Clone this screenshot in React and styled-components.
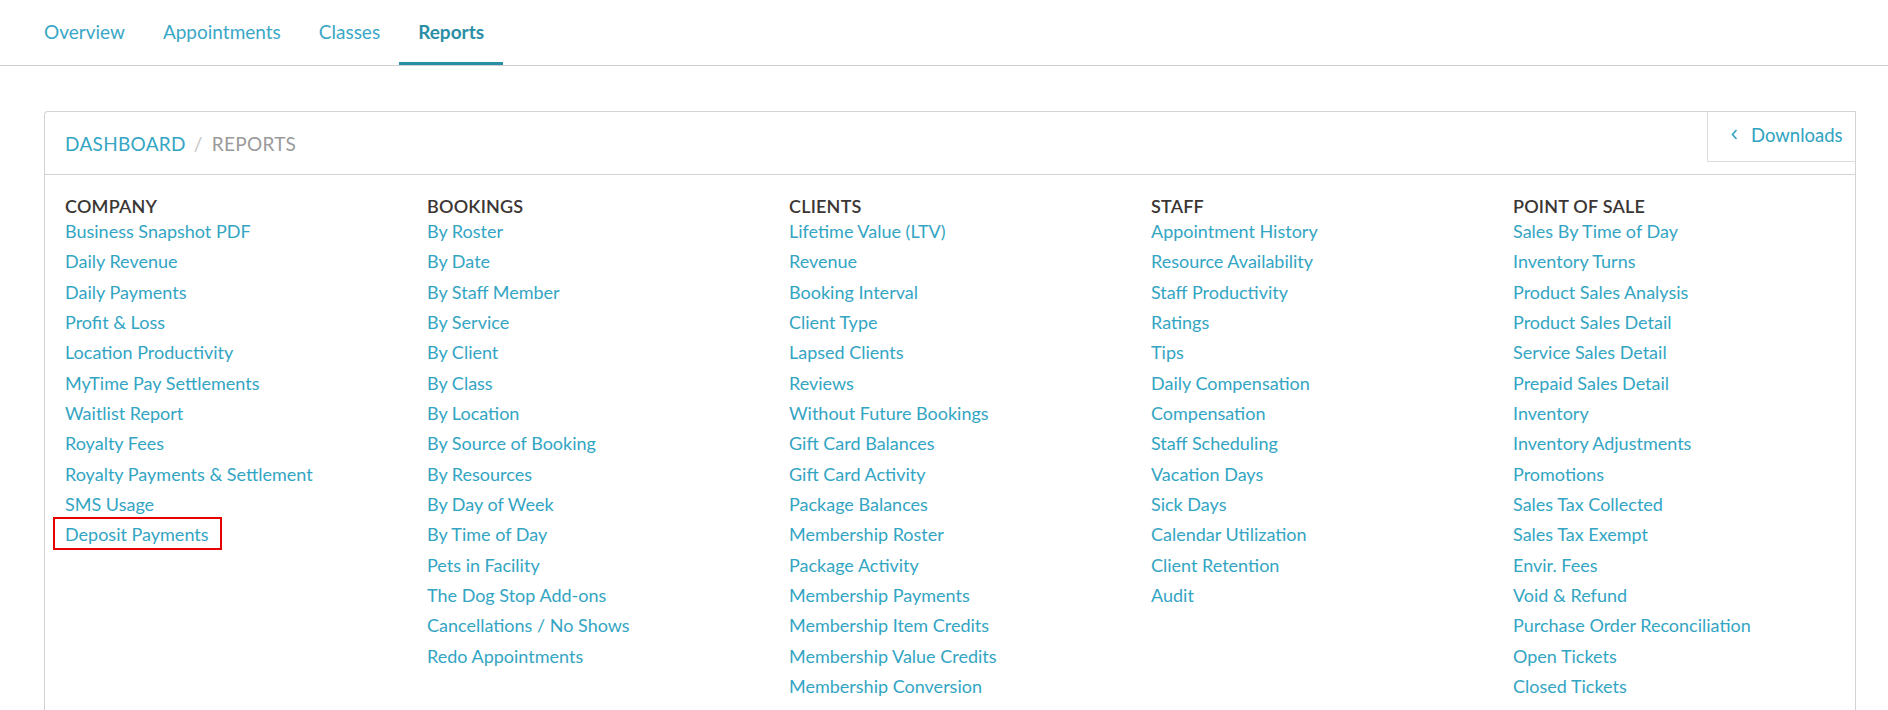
import React from "react";
import styled, { createGlobalStyle } from "styled-components";

const Global = createGlobalStyle`
  html, body { margin: 0; padding: 0; background: #fff; }
  body { font-family: Lato, "Open Sans", sans-serif; -webkit-font-smoothing: antialiased; }
  * { box-sizing: border-box; }
`;

const Nav = styled.nav`
  display: flex;
  padding-left: 25px;
  height: 66px;
  border-bottom: 1px solid #cfcfcf;
`;

const Tab = styled.a`
  display: flex;
  align-items: center;
  height: 65px;
  padding: 0 19px;
  font-size: 19px;
  color: ${(p) => (p.$active ? "#2a8fa6" : "#3aa7c6")};
  font-weight: ${(p) => (p.$active ? 700 : 400)};
  border-bottom: 3px solid ${(p) => (p.$active ? "#2a8fa6" : "transparent")};
  cursor: pointer;
`;

const Page = styled.main`
  padding: 45px 32px 0 44px;
`;

const Card = styled.section`
  position: relative;
  border: 1px solid #d3d3d3;
  border-radius: 4px 4px 0 0;
  border-bottom: none;
  height: 620px;
`;

const CardHeader = styled.header`
  height: 63px;
  display: flex;
  align-items: center;
  padding: 0 20px;
  border-bottom: 1px solid #d3d3d3;
  font-size: 19px;
  letter-spacing: 0.3px;
`;

const Crumb = styled.span`
  color: ${(p) => (p.$current ? "#9a9a9a" : "#34a6c4")};
`;

const Slash = styled.span`
  color: #c4c4c4;
  margin: 0 9px 0 8px;
`;

const Downloads = styled.button`
  position: absolute;
  top: -1px;
  right: -1px;
  width: 149px;
  height: 51px;
  display: flex;
  align-items: center;
  gap: 13px;
  padding: 0 0 4px 23px;
  background: #fff;
  border: 1px solid #dcdcdc;
  border-top-color: #d3d3d3;
  border-right-color: #d3d3d3;
  font-family: inherit;
  font-size: 18.5px;
  color: #2fa3c0;
  cursor: pointer;
`;

const Columns = styled.div`
  display: grid;
  grid-template-columns: repeat(5, 1fr);
  padding-top: 21px;
`;

const Column = styled.div`
  display: flex;
  flex-direction: column;
  padding-left: 20px;
`;

const Heading = styled.h3`
  margin: 0;
  height: 20px;
  line-height: 20px;
  font-size: 18px;
  font-weight: 600;
  color: #3b3634;
  text-transform: uppercase;
  letter-spacing: 0.2px;
`;

const Item = styled.div`
  height: 30.33px;
  line-height: 30.33px;
`;

const ReportLink = styled.a`
  position: relative;
  display: inline-block;
  font-size: 18px;
  color: #33a5c3;
  cursor: pointer;
  white-space: nowrap;
  ${(p) =>
    p.$highlight &&
    `
    &::after {
      content: "";
      position: absolute;
      left: -12px;
      right: -13px;
      top: -2px;
      bottom: 0;
      border: 2px solid #e60000;
    }
  `}
`;

const columns = [
  {
    title: "Company",
    items: [
      "Business Snapshot PDF",
      "Daily Revenue",
      "Daily Payments",
      "Profit & Loss",
      "Location Productivity",
      "MyTime Pay Settlements",
      "Waitlist Report",
      "Royalty Fees",
      "Royalty Payments & Settlement",
      "SMS Usage",
      "Deposit Payments",
    ],
    highlight: "Deposit Payments",
  },
  {
    title: "Bookings",
    items: [
      "By Roster",
      "By Date",
      "By Staff Member",
      "By Service",
      "By Client",
      "By Class",
      "By Location",
      "By Source of Booking",
      "By Resources",
      "By Day of Week",
      "By Time of Day",
      "Pets in Facility",
      "The Dog Stop Add-ons",
      "Cancellations / No Shows",
      "Redo Appointments",
    ],
  },
  {
    title: "Clients",
    items: [
      "Lifetime Value (LTV)",
      "Revenue",
      "Booking Interval",
      "Client Type",
      "Lapsed Clients",
      "Reviews",
      "Without Future Bookings",
      "Gift Card Balances",
      "Gift Card Activity",
      "Package Balances",
      "Membership Roster",
      "Package Activity",
      "Membership Payments",
      "Membership Item Credits",
      "Membership Value Credits",
      "Membership Conversion",
      "Walk-Ins",
    ],
  },
  {
    title: "Staff",
    items: [
      "Appointment History",
      "Resource Availability",
      "Staff Productivity",
      "Ratings",
      "Tips",
      "Daily Compensation",
      "Compensation",
      "Staff Scheduling",
      "Vacation Days",
      "Sick Days",
      "Calendar Utilization",
      "Client Retention",
      "Audit",
    ],
  },
  {
    title: "Point of Sale",
    items: [
      "Sales By Time of Day",
      "Inventory Turns",
      "Product Sales Analysis",
      "Product Sales Detail",
      "Service Sales Detail",
      "Prepaid Sales Detail",
      "Inventory",
      "Inventory Adjustments",
      "Promotions",
      "Sales Tax Collected",
      "Sales Tax Exempt",
      "Envir. Fees",
      "Void & Refund",
      "Purchase Order Reconciliation",
      "Open Tickets",
      "Closed Tickets",
      "All Purchases",
    ],
  },
];

const Chevron = () => (
  <svg width="7" height="11" viewBox="0 0 7 11" fill="none">
    <polyline points="5.5,1 1.5,5.5 5.5,10" stroke="#2fa3c0" strokeWidth="1.6" />
  </svg>
);

export default function App() {
  return (
    <>
      <Global />
      <Nav>
        <Tab>Overview</Tab>
        <Tab>Appointments</Tab>
        <Tab>Classes</Tab>
        <Tab $active>Reports</Tab>
      </Nav>
      <Page>
        <Card>
          <CardHeader>
            <Crumb>DASHBOARD</Crumb>
            <Slash>/</Slash>
            <Crumb $current>REPORTS</Crumb>
          </CardHeader>
          <Downloads>
            <Chevron />
            Downloads
          </Downloads>
          <Columns>
            {columns.map((col) => (
              <Column key={col.title}>
                <Heading>{col.title}</Heading>
                {col.items.map((it) => (
                  <Item key={it}>
                    <ReportLink $highlight={it === col.highlight}>{it}</ReportLink>
                  </Item>
                ))}
              </Column>
            ))}
          </Columns>
        </Card>
      </Page>
    </>
  );
}
